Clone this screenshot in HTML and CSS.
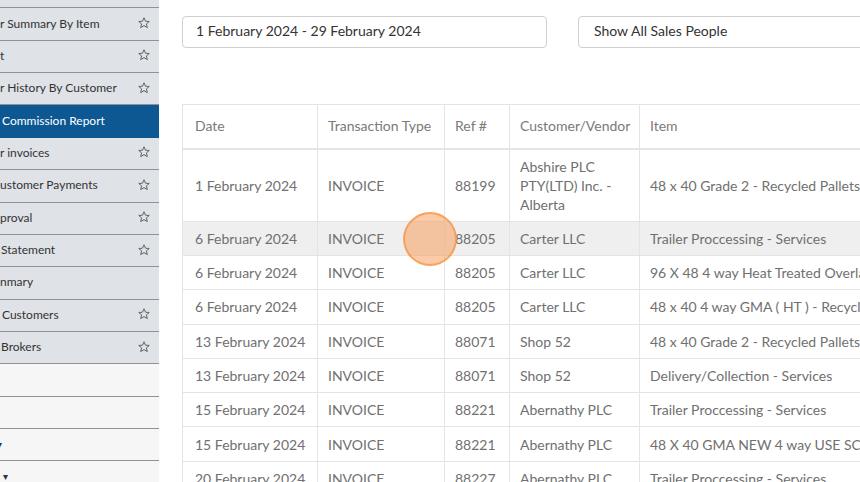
FILE: index.html
```html
<!DOCTYPE html>
<html>
<head>
<meta charset="utf-8">
<link rel="stylesheet" href="styles.css">
</head>
<body>
<div class="page">
  <aside class="sidebar">
    <div class="item"><span class="label"></span></div>
    <div class="item"><span class="label">r Summary By Item</span><svg class="star" viewBox="0 0 12 12"><path d="M6 0.8 L7.5 4.2 L11.2 4.5 L8.4 6.9 L9.3 10.6 L6 8.6 L2.7 10.6 L3.6 6.9 L0.8 4.5 L4.5 4.2 Z"/></svg></div>
    <div class="item"><span class="label">t</span><svg class="star" viewBox="0 0 12 12"><path d="M6 0.8 L7.5 4.2 L11.2 4.5 L8.4 6.9 L9.3 10.6 L6 8.6 L2.7 10.6 L3.6 6.9 L0.8 4.5 L4.5 4.2 Z"/></svg></div>
    <div class="item"><span class="label">r History By Customer</span><svg class="star" viewBox="0 0 12 12"><path d="M6 0.8 L7.5 4.2 L11.2 4.5 L8.4 6.9 L9.3 10.6 L6 8.6 L2.7 10.6 L3.6 6.9 L0.8 4.5 L4.5 4.2 Z"/></svg></div>
    <div class="item active"><span class="label ind2">Commission Report</span></div>
    <div class="item"><span class="label">r invoices</span><svg class="star" viewBox="0 0 12 12"><path d="M6 0.8 L7.5 4.2 L11.2 4.5 L8.4 6.9 L9.3 10.6 L6 8.6 L2.7 10.6 L3.6 6.9 L0.8 4.5 L4.5 4.2 Z"/></svg></div>
    <div class="item"><span class="label">ustomer Payments</span><svg class="star" viewBox="0 0 12 12"><path d="M6 0.8 L7.5 4.2 L11.2 4.5 L8.4 6.9 L9.3 10.6 L6 8.6 L2.7 10.6 L3.6 6.9 L0.8 4.5 L4.5 4.2 Z"/></svg></div>
    <div class="item"><span class="label">proval</span><svg class="star" viewBox="0 0 12 12"><path d="M6 0.8 L7.5 4.2 L11.2 4.5 L8.4 6.9 L9.3 10.6 L6 8.6 L2.7 10.6 L3.6 6.9 L0.8 4.5 L4.5 4.2 Z"/></svg></div>
    <div class="item"><span class="label ind1">Statement</span><svg class="star" viewBox="0 0 12 12"><path d="M6 0.8 L7.5 4.2 L11.2 4.5 L8.4 6.9 L9.3 10.6 L6 8.6 L2.7 10.6 L3.6 6.9 L0.8 4.5 L4.5 4.2 Z"/></svg></div>
    <div class="item"><span class="label">nmary</span></div>
    <div class="item"><span class="label ind2">Customers</span><svg class="star" viewBox="0 0 12 12"><path d="M6 0.8 L7.5 4.2 L11.2 4.5 L8.4 6.9 L9.3 10.6 L6 8.6 L2.7 10.6 L3.6 6.9 L0.8 4.5 L4.5 4.2 Z"/></svg></div>
    <div class="item"><span class="label ind1">Brokers</span><svg class="star" viewBox="0 0 12 12"><path d="M6 0.8 L7.5 4.2 L11.2 4.5 L8.4 6.9 L9.3 10.6 L6 8.6 L2.7 10.6 L3.6 6.9 L0.8 4.5 L4.5 4.2 Z"/></svg></div>
    <div class="item light"></div>
    <div class="item light"></div>
    <div class="item light"><span class="caret">▾</span></div>
    <div class="item light"><span class="caret c2">▾</span></div>
  </aside>
  <main class="main">
    <div class="filters">
      <div class="input date">1 February 2024 - 29 February 2024</div>
      <div class="input people">Show All Sales People</div>
    </div>
    <table class="report">
      <colgroup>
        <col class="c-date"><col class="c-type"><col class="c-ref"><col class="c-cust"><col class="c-item">
      </colgroup>
      <thead>
        <tr><th>Date</th><th>Transaction Type</th><th>Ref #</th><th>Customer/Vendor</th><th>Item</th></tr>
      </thead>
      <tbody>
        <tr><td>1 February 2024</td><td>INVOICE</td><td>88199</td><td>Abshire PLC PTY(LTD) Inc. - Alberta</td><td>48 x 40 Grade 2 - Recycled Pallets</td></tr>
        <tr class="hover"><td>6 February 2024</td><td>INVOICE</td><td>88205</td><td>Carter LLC</td><td>Trailer Proccessing - Services</td></tr>
        <tr><td>6 February 2024</td><td>INVOICE</td><td>88205</td><td>Carter LLC</td><td>96 X 48 4 way Heat Treated Overlap</td></tr>
        <tr><td>6 February 2024</td><td>INVOICE</td><td>88205</td><td>Carter LLC</td><td>48 x 40 4 way GMA ( HT ) - Recycled</td></tr>
        <tr><td>13 February 2024</td><td>INVOICE</td><td>88071</td><td>Shop 52</td><td>48 x 40 Grade 2 - Recycled Pallets</td></tr>
        <tr><td>13 February 2024</td><td>INVOICE</td><td>88071</td><td>Shop 52</td><td>Delivery/Collection - Services</td></tr>
        <tr><td>15 February 2024</td><td>INVOICE</td><td>88221</td><td>Abernathy PLC</td><td>Trailer Proccessing - Services</td></tr>
        <tr><td>15 February 2024</td><td>INVOICE</td><td>88221</td><td>Abernathy PLC</td><td>48 X 40 GMA NEW 4 way USE SCRAP</td></tr>
        <tr><td>20 February 2024</td><td>INVOICE</td><td>88227</td><td>Abernathy PLC</td><td>Trailer Proccessing - Services</td></tr>
      </tbody>
    </table>
  </main>
</div>
<div class="click-marker"></div>
</body>
</html>
```

FILE: styles.css
```css
* { box-sizing: border-box; }
html, body {
  margin: 0;
  padding: 0;
  width: 860px;
  height: 482px;
  overflow: hidden;
  background: #fff;
  font-family: "Lato", "Open Sans", sans-serif;
}
.page {
  display: flex;
  height: 482px;
  overflow: hidden;
}
.sidebar {
  width: 159px;
  flex: 0 0 159px;
  margin-top: -24px;
  background: #f6f6f6;
}
.item {
  height: 32.36px;
  border-bottom: 1px solid #8f9398;
  background: #dfe2e7;
  display: flex;
  align-items: center;
  justify-content: space-between;
  padding: 0 8px 2px 0;
  font-size: 12px;
  color: #333;
  white-space: nowrap;
  overflow: hidden;
}
.item.light { background: #f6f6f6; }
.item.active {
  background: #0d5893;
  color: #fff;
  border-bottom-color: #0d5893;
}
.ind1 { padding-left: 1px; }
.ind2 { padding-left: 2px; }
.star {
  width: 12px;
  height: 12px;
  flex: 0 0 12px;
  margin-right: 1px;
  fill: none;
  stroke: #555;
  stroke-width: 0.9;
  stroke-linejoin: round;
}
.caret {
  font-size: 10px;
  color: #333;
  margin-left: -3px;
}
.caret.c2 { margin-left: 3px; }
.main {
  flex: 1;
  padding: 16px 0 0 23px;
  overflow: hidden;
}
.filters {
  display: flex;
  gap: 31px;
  height: 32px;
}
.input {
  height: 32px;
  border: 1px solid #cfcfcf;
  border-radius: 4px;
  padding: 0 13px 3px;
  display: flex;
  align-items: center;
  font-size: 14px;
  color: #333;
  white-space: nowrap;
}
.input.date { width: 365px; flex: 0 0 365px; }
.input.people { width: 320px; flex: 0 0 320px; padding-left: 15px; }
.report {
  margin-top: 56px;
  border-collapse: collapse;
  table-layout: fixed;
  width: 1000px;
  font-size: 14px;
  color: #707070;
}
.c-date { width: 135px; }
.c-type { width: 127px; }
.c-ref { width: 65px; }
.c-cust { width: 130px; }
.c-item { width: 543px; }
.report th, .report td {
  border: 1px solid #e4e4e4;
  padding: 7.15px 10px;
  line-height: 19px;
  text-align: left;
  vertical-align: middle;
  font-weight: normal;
  white-space: nowrap;
}
.report td:nth-child(4) { white-space: normal; }
.report th {
  color: #7a7a7a;
  height: 44px;
  padding-bottom: 9px;
  border-bottom: 2px solid #e4e4e4;
}
.report th:first-child, .report td:first-child { padding-left: 12px; }
.report tr.hover td { background: #efefef; }
.click-marker {
  position: absolute;
  left: 403px;
  top: 212px;
  width: 54px;
  height: 54px;
  border-radius: 50%;
  background: rgba(247, 150, 80, 0.5);
  border: 2px solid rgba(245, 150, 70, 0.75);
}
```
